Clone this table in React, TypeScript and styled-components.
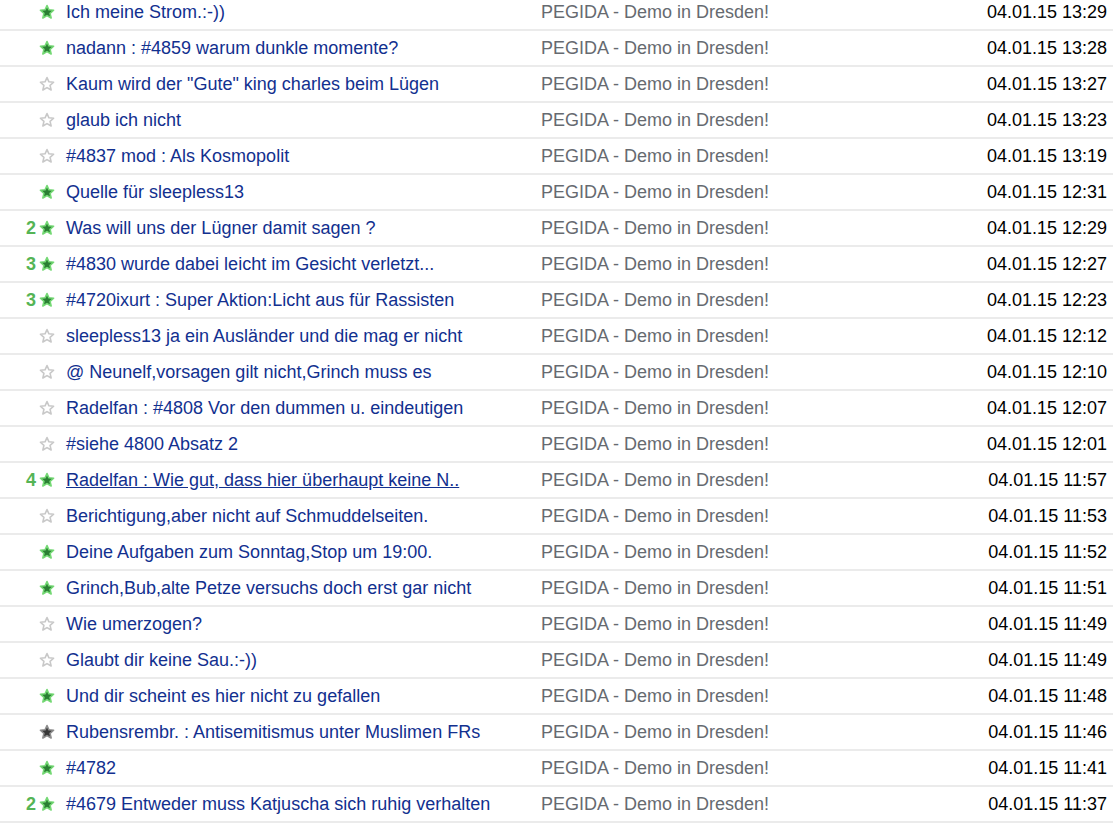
import React from 'react';
import styled, { createGlobalStyle } from 'styled-components';

type Star = 'green' | 'empty' | 'dark';

interface Post {
  count?: number;
  star: Star;
  title: string;
  time: string;
  hover?: boolean;
}

const posts: Post[] = [
  { star: 'green', title: 'Ich meine Strom.:-))', time: '13:29' },
  { star: 'green', title: 'nadann : #4859 warum dunkle momente?', time: '13:28' },
  { star: 'empty', title: 'Kaum wird der "Gute" king charles beim Lügen', time: '13:27' },
  { star: 'empty', title: 'glaub ich nicht', time: '13:23' },
  { star: 'empty', title: '#4837 mod : Als Kosmopolit', time: '13:19' },
  { star: 'green', title: 'Quelle für sleepless13', time: '12:31' },
  { count: 2, star: 'green', title: 'Was will uns der Lügner damit sagen ?', time: '12:29' },
  { count: 3, star: 'green', title: '#4830 wurde dabei leicht im Gesicht verletzt...', time: '12:27' },
  { count: 3, star: 'green', title: '#4720ixurt : Super Aktion:Licht aus für Rassisten', time: '12:23' },
  { star: 'empty', title: 'sleepless13 ja ein Ausländer und die mag er nicht', time: '12:12' },
  { star: 'empty', title: '@ Neunelf,vorsagen gilt nicht,Grinch muss es', time: '12:10' },
  { star: 'empty', title: 'Radelfan : #4808 Vor den dummen u. eindeutigen', time: '12:07' },
  { star: 'empty', title: '#siehe 4800 Absatz 2', time: '12:01' },
  { count: 4, star: 'green', title: 'Radelfan : Wie gut, dass hier überhaupt keine N..', time: '11:57', hover: true },
  { star: 'empty', title: 'Berichtigung,aber nicht auf Schmuddelseiten.', time: '11:53' },
  { star: 'green', title: 'Deine Aufgaben zum Sonntag,Stop um 19:00.', time: '11:52' },
  { star: 'green', title: 'Grinch,Bub,alte Petze versuchs doch erst gar nicht', time: '11:51' },
  { star: 'empty', title: 'Wie umerzogen?', time: '11:49' },
  { star: 'empty', title: 'Glaubt dir keine Sau.:-))', time: '11:49' },
  { star: 'green', title: 'Und dir scheint es hier nicht zu gefallen', time: '11:48' },
  { star: 'dark', title: 'Rubensrembr. : Antisemitismus unter Muslimen FRs', time: '11:46' },
  { star: 'green', title: '#4782', time: '11:41' },
  { count: 2, star: 'green', title: '#4679 Entweder muss Katjuscha sich ruhig verhalten', time: '11:37' },
];

const starColors: Record<Star, { fill: string; stroke: string }> = {
  green: { fill: '#2a7f33', stroke: '#74d874' },
  empty: { fill: '#ffffff', stroke: '#c8c8c8' },
  dark: { fill: '#383838', stroke: '#8c8c8c' },
};

const StarIcon = ({ kind }: { kind: Star }) => {
  const c = starColors[kind];
  return (
    <svg width="16" height="16" viewBox="0 0 24 24">
      <path
        d="M12 2.2l2.9 6.5 7 .7-5.3 4.7 1.6 6.9L12 17.4 5.8 21l1.6-6.9L2.1 9.4l7-.7z"
        fill={c.fill}
        stroke={c.stroke}
        strokeWidth="2.4"
        strokeLinejoin="round"
      />
    </svg>
  );
};

const App = () => {
  return (
    <>
      <GlobalStyles />
      <List>
        {posts.map((p, i) => (
          <Row key={i}>
            <Count>{p.count ?? ''}</Count>
            <StarCell>
              <StarIcon kind={p.star} />
            </StarCell>
            <Title $hover={p.hover}>{p.title}</Title>
            <Subject>PEGIDA - Demo in Dresden!</Subject>
            <Time>04.01.15 {p.time}</Time>
          </Row>
        ))}
      </List>
    </>
  );
};

export default App;

const GlobalStyles = createGlobalStyle`
  html, body {
    margin: 0;
    padding: 0;
    background: #fff;
    overflow: hidden;
  }
  body {
    font-family: "Liberation Sans", Arial, Helvetica, sans-serif;
  }
`;

const List = styled.div`
  width: 1113px;
  margin-top: -5px;
`;

const Row = styled.div`
  display: grid;
  grid-template-columns: 36px 30px 475px 1fr auto;
  align-items: center;
  height: 34px;
  border-bottom: 2px solid #ebebeb;
  font-size: 18px;
`;

const Count = styled.div`
  text-align: right;
  color: #55b455;
  font-weight: bold;
`;

const StarCell = styled.div`
  display: flex;
  align-items: center;
  padding-left: 3px;
`;

const Title = styled.a<{ $hover?: boolean }>`
  color: #12308f;
  text-decoration: ${(p) => (p.$hover ? 'underline' : 'none')};
  white-space: nowrap;
  cursor: pointer;
`;

const Subject = styled.div`
  color: #666a70;
  white-space: nowrap;
`;

const Time = styled.div`
  color: #000;
  padding-right: 6px;
  white-space: nowrap;
`;
